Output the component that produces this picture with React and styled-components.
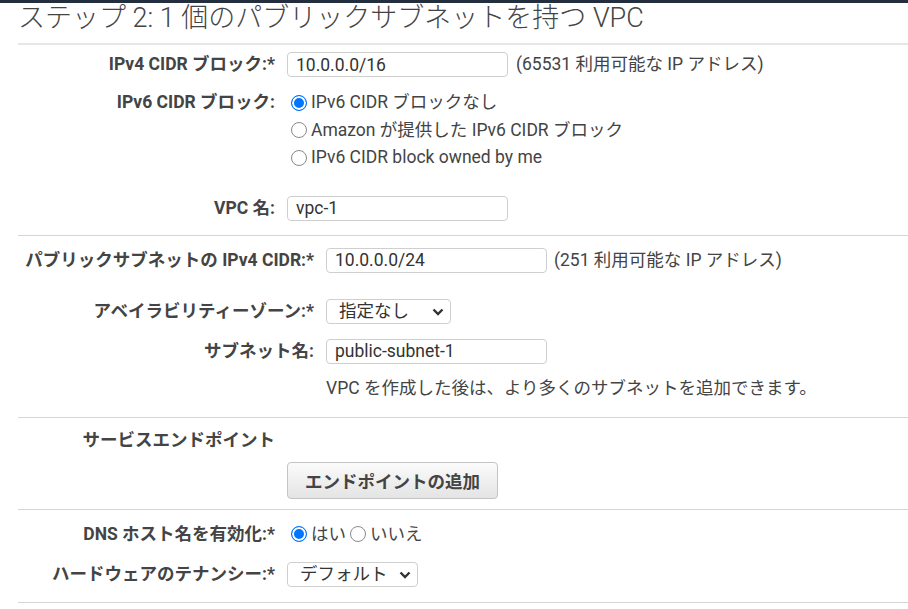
import React from 'react'
import styled, { createGlobalStyle } from 'styled-components'

const GlobalStyle = createGlobalStyle`
  body {
    margin: 0;
    background: #fff;
    color: #444;
    font-family: Roboto, "Noto Sans CJK JP", sans-serif;
    font-size: 17.5px;
    overflow: hidden;
  }
  * { box-sizing: border-box; }
`

const TopBar = styled.div`
  height: 3px;
  background: #232f3e;
`

const Page = styled.div`
  padding-left: 18px;
`

const Title = styled.h1`
  margin: 0;
  padding-bottom: 10px;
  font-size: 27px;
  font-weight: 300;
  line-height: 30px;
  color: #444;
  border-bottom: 2px solid #e6e6e6;
`

const Section = styled.div`
  padding: ${p => p.$pad};
  border-bottom: 1px solid #d5d5d5;
`

const Row = styled.div`
  display: flex;
  align-items: ${p => (p.$top ? 'flex-start' : 'center')};
  margin-top: ${p => p.$mt || 0}px;
`

const Label = styled.div`
  flex: none;
  width: ${p => p.$w}px;
  padding-right: 12px;
  text-align: right;
  font-weight: 700;
  line-height: ${p => p.$lh || 25}px;
  color: #444;
  white-space: nowrap;
`

const TextInput = styled.input`
  width: ${p => p.$w || 221}px;
  height: 25px;
  padding: 0 8px;
  border: 1px solid #cfcfcf;
  border-radius: 4px;
  font: inherit;
  color: #333;
  background: #fff;
  outline: none;
`

const Hint = styled.span`
  margin-left: ${p => p.$ml || 8}px;
  line-height: 25px;
  white-space: nowrap;
`

const HelpText = styled.div`
  line-height: 25px;
  white-space: nowrap;
`

const RadioGroup = styled.div`
  display: flex;
  flex-direction: ${p => (p.$inline ? 'row' : 'column')};
  line-height: ${p => (p.$inline ? 25 : 27.5)}px;
`

const RadioLabel = styled.label`
  display: flex;
  align-items: center;
  white-space: nowrap;
`

const Radio = styled.input.attrs({ type: 'radio' })`
  appearance: none;
  flex: none;
  width: 16px;
  height: 16px;
  margin: 0 4px;
  border: 1px solid #8a8a8a;
  border-radius: 50%;
  background: #fff;

  &:checked {
    border-color: #0075ff;
    background: #0075ff;
    box-shadow: inset 0 0 0 2px #fff;
  }
`

const SelectWrap = styled.div`
  position: relative;
  display: inline-block;
`

const Select = styled.select`
  appearance: none;
  width: ${p => p.$w}px;
  height: 25px;
  padding: 0 0 0 12px;
  border: 1px solid #cfcfcf;
  border-radius: 4px;
  background: #fff;
  font: inherit;
  color: #333;
  outline: none;
`

const Chevron = styled.svg`
  position: absolute;
  right: 7px;
  top: 9px;
  pointer-events: none;
`

const Button = styled.button`
  width: 211px;
  height: 37px;
  border: 1px solid #c4c4c4;
  border-radius: 4px;
  background: linear-gradient(#fbfbfb, #e4e4e4);
  font: inherit;
  font-weight: 700;
  color: #444;
`

const Dropdown = ({ w, value, options }) => (
  <SelectWrap>
    <Select $w={w} defaultValue={value}>
      {options.map(o => <option key={o}>{o}</option>)}
    </Select>
    <Chevron width="12" height="8" viewBox="0 0 12 8">
      <polyline points="1.5,1.5 6,6 10.5,1.5" fill="none" stroke="#333" strokeWidth="2.4" />
    </Chevron>
  </SelectWrap>
)

export default function App() {
  return (
    <>
      <GlobalStyle />
      <TopBar />
      <Page>
        <Title>ステップ 2: 1 個のパブリックサブネットを持つ VPC</Title>

        <Section $pad="7px 0 14px">
          <Row>
            <Label $w={269}>IPv4 CIDR ブロック:*</Label>
            <TextInput defaultValue="10.0.0.0/16" />
            <Hint>(65531 利用可能な IP アドレス)</Hint>
          </Row>
          <Row $top $mt={12}>
            <Label $w={269} $lh={27.5}>IPv6 CIDR ブロック:</Label>
            <RadioGroup>
              <RadioLabel><Radio name="ipv6" defaultChecked />IPv6 CIDR ブロックなし</RadioLabel>
              <RadioLabel><Radio name="ipv6" />Amazon が提供した IPv6 CIDR ブロック</RadioLabel>
              <RadioLabel><Radio name="ipv6" />IPv6 CIDR block owned by me</RadioLabel>
            </RadioGroup>
          </Row>
          <Row $mt={24}>
            <Label $w={269}>VPC 名:</Label>
            <TextInput defaultValue="vpc-1" />
          </Row>
        </Section>

        <Section $pad="12px 0 16px">
          <Row>
            <Label $w={308}>パブリックサブネットの IPv4 CIDR:*</Label>
            <TextInput defaultValue="10.0.0.0/24" />
            <Hint $ml={7}>(251 利用可能な IP アドレス)</Hint>
          </Row>
          <Row $mt={26}>
            <Label $w={308}>アベイラビリティーゾーン:*</Label>
            <Dropdown w={125} value="指定なし" options={['指定なし']} />
          </Row>
          <Row $mt={15}>
            <Label $w={308}>サブネット名:</Label>
            <TextInput defaultValue="public-subnet-1" />
          </Row>
          <Row $mt={12}>
            <Label $w={308} />
            <HelpText>VPC を作成した後は、より多くのサブネットを追加できます。</HelpText>
          </Row>
        </Section>

        <Section $pad="10px 0 10px">
          <Row>
            <Label $w={269}>サービスエンドポイント</Label>
          </Row>
          <Row $mt={9}>
            <Label $w={269} />
            <Button type="button">エンドポイントの追加</Button>
          </Row>
        </Section>

        <Section $pad="12px 0 15px">
          <Row>
            <Label $w={269}>DNS ホスト名を有効化:*</Label>
            <RadioGroup $inline>
              <RadioLabel><Radio name="dns" defaultChecked />はい</RadioLabel>
              <RadioLabel><Radio name="dns" />いいえ</RadioLabel>
            </RadioGroup>
          </Row>
          <Row $mt={15}>
            <Label $w={269}>ハードウェアのテナンシー:*</Label>
            <Dropdown w={131} value="デフォルト" options={['デフォルト']} />
          </Row>
        </Section>
      </Page>
    </>
  )
}
